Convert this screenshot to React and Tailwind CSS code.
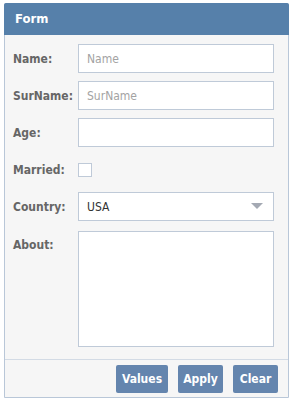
import React from 'react';

const font = { fontFamily: '"DejaVu Sans Condensed", "Liberation Sans", sans-serif' };

function Row({ label, children, className = '' }) {
    return (
        <div className={`flex items-center ${className}`}>
            <label className="w-[73px] shrink-0 pl-[8px] text-[12px] font-bold text-[#666]">{label}</label>
            {children}
        </div>
    );
}

export default function App() {
    const input = "w-[196px] h-[29px] border border-[#bfcad8] bg-white px-[8px] text-[12px] text-[#333] placeholder:text-[#a3a3a3] outline-none";
    return (
        <div className="w-[295px] h-[403px] bg-white pt-[3px] pl-[4px]" style={font}>
            <div className="w-[285px] h-[395px] border border-[#b9c7d8] rounded-t-[2px] bg-[#f6f6f6] flex flex-col">
                {/* Header */}
                <div className="h-[32px] -mt-px -mx-px bg-[#5680aa] rounded-t-[2px] flex items-center px-[11px]">
                    <span className="text-white text-[13px] font-bold">Form</span>
                </div>

                {/* Body */}
                <div className="flex-1 flex flex-col pt-[9px]">
                    <Row label="Name:">
                        <input className={input} placeholder="Name" />
                    </Row>
                    <Row label="SurName:" className="mt-[8px]">
                        <input className={input} placeholder="SurName" />
                    </Row>
                    <Row label="Age:" className="mt-[8px]">
                        <input className={input} />
                    </Row>
                    <Row label="Married:" className="mt-[8px] h-[29px]">
                        <div className="w-[14px] h-[14px] border border-[#bfcad8] bg-white" />
                    </Row>
                    <Row label="Country:" className="mt-[8px]">
                        <div className={`${input} flex items-center justify-between`}>
                            <span>USA</span>
                            <svg width="12" height="7" viewBox="0 0 12 7" className="mr-[2px]">
                                <path d="M0 0 H12 L6 6 Z" fill="#a4a9b3" />
                            </svg>
                        </div>
                    </Row>
                    <div className="flex items-start mt-[10px]">
                        <label className="w-[73px] shrink-0 pl-[8px] pt-[5px] text-[12px] font-bold text-[#666]">About:</label>
                        <textarea className="w-[196px] h-[116px] border border-[#bfcad8] bg-white resize-none outline-none" />
                    </div>
                </div>

                {/* Footer */}
                <div className="h-[38px] border-t border-[#d3dbe5] flex items-center justify-end gap-[10px] pr-[10px]">
                    <button className="w-[52px] h-[28px] bg-[#6485ae] rounded-[2px] text-white text-[12px] font-bold">Values</button>
                    <button className="w-[45px] h-[28px] bg-[#6485ae] rounded-[2px] text-white text-[12px] font-bold">Apply</button>
                    <button className="w-[45px] h-[28px] bg-[#6485ae] rounded-[2px] text-white text-[12px] font-bold">Clear</button>
                </div>
            </div>
        </div>
    );
}
